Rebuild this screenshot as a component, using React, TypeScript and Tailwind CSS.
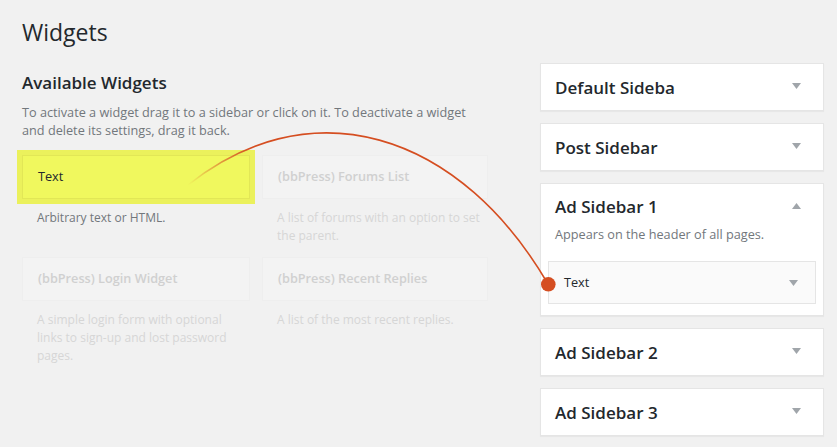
const font = { fontFamily: '"Open Sans", "Noto Sans", sans-serif' };

type Widget = { title: string; desc: string; active?: boolean };

const widgets: Widget[] = [
  { title: "Text", desc: "Arbitrary text or HTML.", active: true },
  { title: "(bbPress) Forums List", desc: "A list of forums with an option to set the parent." },
  { title: "(bbPress) Login Widget", desc: "A simple login form with optional links to sign-up and lost password pages." },
  { title: "(bbPress) Recent Replies", desc: "A list of the most recent replies." },
];

function Caret({ up = false }: { up?: boolean }) {
  return (
    <svg width="9" height="6" viewBox="0 0 9 6" className="shrink-0">
      <path d={up ? "M0 6 L4.5 0 L9 6 Z" : "M0 0 L9 0 L4.5 6 Z"} fill="#a0a5aa" />
    </svg>
  );
}

function WidgetCard({ w }: { w: Widget }) {
  return (
    <div>
      <div className="relative">
        {w.active && <div className="absolute -inset-[5px] bg-[#ebf15c]" />}
        <div
          className={`relative flex h-[44px] items-center border px-[15px] text-[12.7px] ${
            w.active
              ? "border-[#e2e756] bg-[#f0f85e] text-[#23282d]"
              : "border-[#eeeeee] bg-[#f3f3f3] font-semibold text-[#d0d0d0]"
          }`}
        >
          {w.title}
        </div>
      </div>
      <p
        className={`mt-[10px] pl-[15px] pr-[5px] text-[12px] leading-[18px] ${
          w.active ? "text-[#72777c]" : "text-[#d6d6d6]"
        }`}
      >
        {w.desc}
      </p>
    </div>
  );
}

function SidebarBox({ title }: { title: string }) {
  return (
    <div className="flex h-[48px] items-center justify-between border border-[#e5e5e5] bg-white pl-[14px] pr-[22px] shadow-[0_1px_1px_rgba(0,0,0,0.04)]">
      <span className="text-[17px] font-semibold leading-[23px] text-[#23282d]">{title}</span>
      <div className="-mt-[2px]">
        <Caret />
      </div>
    </div>
  );
}

export default function App() {
  return (
    <div className="relative h-[447px] w-[837px] overflow-hidden bg-[#f1f1f1]" style={font}>
      <div className="flex">
        {/* Available widgets */}
        <div className="w-[488px] pl-[22px] pt-[18px]">
          <h1 className="text-[23px] font-normal leading-[29px] text-[#23282d]">Widgets</h1>
          <h2 className="mt-[24px] text-[17px] font-semibold leading-[23px] text-[#23282d]">
            Available Widgets
          </h2>
          <p className="mt-[9px] text-[12.7px] leading-[18px] text-[#72777c]">
            To activate a widget drag it to a sidebar or click on it. To deactivate a widget and delete its
            settings, drag it back.
          </p>
          <div className="mt-[16px] grid grid-cols-[228px_226px] gap-x-[12px] gap-y-[12px]">
            {widgets.map((w) => (
              <WidgetCard key={w.title} w={w} />
            ))}
          </div>
        </div>

        {/* Sidebars */}
        <div className="ml-[52px] flex w-[284px] flex-col gap-[12px] pt-[63px]">
          <SidebarBox title="Default Sideba" />
          <SidebarBox title="Post Sidebar" />
          <div className="border border-[#e5e5e5] bg-white pb-[11px] pt-[11px] shadow-[0_1px_1px_rgba(0,0,0,0.04)]">
            <div className="flex items-center justify-between pl-[14px] pr-[22px]">
              <span className="text-[17px] font-semibold leading-[23px] text-[#23282d]">Ad Sidebar 1</span>
              <div className="-mt-[2px]">
                <Caret up />
              </div>
            </div>
            <p className="mt-[7px] pl-[14px] text-[12.7px] leading-[18px] text-[#72777c]">
              Appears on the header of all pages.
            </p>
            <div className="mx-[7px] mt-[18px] flex h-[43px] items-center justify-between border border-[#e5e5e5] bg-[#fafafa] pl-[15px] pr-[17px]">
              <span className="text-[12.7px] text-[#23282d]">Text</span>
              <Caret />
            </div>
          </div>
          <SidebarBox title="Ad Sidebar 2" />
          <SidebarBox title="Ad Sidebar 3" />
        </div>
      </div>

      {/* drag path overlay */}
      <svg className="pointer-events-none absolute inset-0" width="837" height="447" viewBox="0 0 837 447">
        <defs>
          <linearGradient id="fade" gradientUnits="userSpaceOnUse" x1="188" y1="185" x2="245" y2="142">
            <stop offset="0" stopColor="#d54e21" stopOpacity="0" />
            <stop offset="1" stopColor="#d54e21" stopOpacity="1" />
          </linearGradient>
        </defs>
        <path d="M188 185 A295 445 0 0 1 548 284" fill="none" stroke="url(#fade)" strokeWidth="1.6" />
        <circle cx="548.3" cy="284.3" r="7.3" fill="#d54e21" />
      </svg>
    </div>
  );
}
